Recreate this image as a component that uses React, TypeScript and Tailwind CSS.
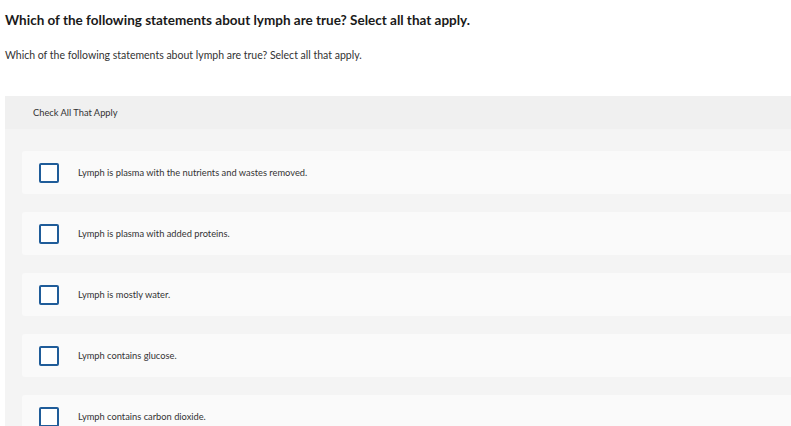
const options = [
  'Lymph is plasma with the nutrients and wastes removed.',
  'Lymph is plasma with added proteins.',
  'Lymph is mostly water.',
  'Lymph contains glucose.',
  'Lymph contains carbon dioxide.',
]

export default function App() {
  return (
    <div className="h-[426px] overflow-hidden bg-white font-['Lato','Liberation_Sans',sans-serif] text-[#1a1a1a]">
      <h1 className="pl-[5px] pt-[12px] text-[13.5px] font-bold leading-[16px]">
        Which of the following statements about lymph are true? Select all that apply.
      </h1>
      <p className="pl-[5px] pt-[21px] text-[10.5px] leading-[13px] text-[#333]">
        Which of the following statements about lymph are true? Select all that apply.
      </p>
      <div className="ml-[5px] mt-[34px] bg-[#f4f4f4]">
        <div className="flex h-[33px] items-center bg-[#f0f0f0] pl-[28px] text-[9.3px] text-[#333]">
          Check All That Apply
        </div>
        <div className="flex flex-col gap-[18px] pl-[17px] pt-[22px] pb-[20px]">
          {options.map((o, i) => (
            <label key={i} className="flex h-[43px] items-center rounded-l-[3px] bg-[#fafafa] pl-[17px]">
              <span className="h-[20px] w-[20px] shrink-0 rounded-[2px] border-2 border-[#1f5c99] bg-white" />
              <span className="ml-[19px] text-[9.3px] text-[#333]">{o}</span>
            </label>
          ))}
        </div>
      </div>
    </div>
  )
}
